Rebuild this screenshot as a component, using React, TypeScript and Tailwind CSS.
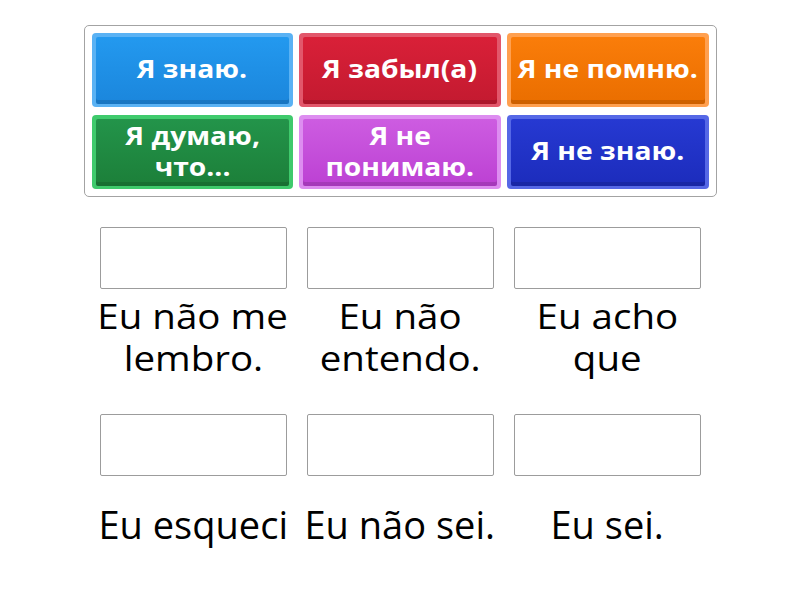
import React from 'react';

type Tile = { lines: string[]; edge: string; face: string };

const tiles: Tile[] = [
  { lines: ['Я знаю.'], edge: 'bg-[#5ab2f4]', face: 'bg-gradient-to-b from-[#2399ef] to-[#1b86dc]' },
  { lines: ['Я забыл(а)'], edge: 'bg-[#e2576b]', face: 'bg-gradient-to-b from-[#d92038] to-[#c31a30]' },
  { lines: ['Я не помню.'], edge: 'bg-[#ffa050]', face: 'bg-gradient-to-b from-[#fa7d0a] to-[#ea6e00]' },
  { lines: ['Я думаю,', 'что...'], edge: 'bg-[#3fca6c]', face: 'bg-gradient-to-b from-[#23944a] to-[#1c7f39]' },
  { lines: ['Я не', 'понимаю.'], edge: 'bg-[#dd8df0]', face: 'bg-gradient-to-b from-[#cd5ce1] to-[#bc40d3]' },
  { lines: ['Я не знаю.'], edge: 'bg-[#5668e6]', face: 'bg-gradient-to-b from-[#2639d2] to-[#1c2cbc]' },
];

const topRow = [
  ['Eu não me', 'lembro.'],
  ['Eu não', 'entendo.'],
  ['Eu acho', 'que'],
];
const bottomRow = ['Eu esqueci', 'Eu não sei.', 'Eu sei.'];

const font = { fontFamily: '"Open Sans", "Noto Sans", sans-serif' };

function DropBox() {
  return <div className="h-[62px] border border-[#9c9c9c] rounded-[2px] bg-white" />;
}

export default function App() {
  return (
    <div className="w-[800px] h-[600px] bg-white flex flex-col items-center pt-[25px]" style={font}>
      {/* card pile */}
      <div className="w-[633px] border border-[#a3a3a3] rounded-[5px] p-[7px] grid grid-cols-3 gap-x-[6px] gap-y-[8px]">
        {tiles.map((t) => (
          <div key={t.lines.join(' ')} className={`${t.edge} h-[74px] rounded-[4px] p-[4px] pb-[3px]`}>
            <div
              className={`${t.face} h-full rounded-[2px] flex flex-col items-center justify-center pb-[4px] text-center shadow-[inset_0_-4px_0_rgba(0,0,0,0.12)]`}
            >
              {t.lines.map((l) => (
                <div key={l} className="whitespace-nowrap text-white font-bold text-[25px] leading-[31px] scale-x-[1.13]">
                  {l}
                </div>
              ))}
            </div>
          </div>
        ))}
      </div>

      {/* drop zones */}
      <div className="mt-[30px] w-[601px] flex flex-col gap-[29px]">
        <div className="grid grid-cols-3 gap-x-[20px]">
          {topRow.map((lines) => (
            <div key={lines.join(' ')} className="flex flex-col">
              <DropBox />
              <div className="h-[96px] flex flex-col items-center justify-center text-center text-black">
                {lines.map((l) => (
                  <div key={l} className="whitespace-nowrap text-[35px] leading-[42px] scale-x-[1.1]">
                    {l}
                  </div>
                ))}
              </div>
            </div>
          ))}
        </div>
        <div className="grid grid-cols-3 gap-x-[20px]">
          {bottomRow.map((label) => (
            <div key={label} className="flex flex-col">
              <DropBox />
              <div className="h-[96px] flex items-center justify-center text-center text-black">
                <div className="whitespace-nowrap text-[39px] leading-[46px] scale-x-[0.975]">{label}</div>
              </div>
            </div>
          ))}
        </div>
      </div>
    </div>
  );
}
